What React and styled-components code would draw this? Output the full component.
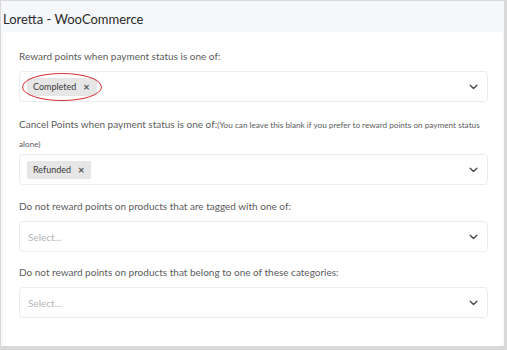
import React from "react";
import styled, { createGlobalStyle } from "styled-components";

const Global = createGlobalStyle`
  html, body { margin: 0; padding: 0; }
  body { font-family: Lato, "Noto Sans", sans-serif; background: #fff; }
  * { box-sizing: border-box; }
`;

const Frame = styled.div`
  width: 507px;
  height: 350px;
  background: #f6f7fb;
  border-style: solid;
  border-color: #d9d9d9;
  border-width: 1px 3px 4px 1px;
  display: flex;
  flex-direction: column;
  overflow: hidden;
`;

const Header = styled.div`
  height: 31px;
  padding: 10px 0 0 2px;
  line-height: 16px;
  font-size: 13px;
  color: #2a2a2a;
`;

const Card = styled.div`
  margin: 0 1px 0 2px;
  background: #fff;
  border-radius: 4px;
  padding: 17px 15px 0 16px;
  flex: 1;
  display: flex;
  flex-direction: column;
`;

const Field = styled.div`
  display: flex;
  flex-direction: column;
  margin-bottom: ${(p) => p.$mb || 0}px;
`;

const Label = styled.div`
  font-size: 10px;
  color: #5c5c5c;
  line-height: ${(p) => p.$lh || 15}px;
  margin-bottom: ${(p) => p.$mb ?? 7}px;
`;

const Hint = styled.span`
  font-size: 8.2px;
  line-height: 10px;
  color: #5c5c5c;
`;

const Select = styled.div`
  height: 31px;
  border: 1px solid #e9edf0;
  border-radius: 4px;
  display: flex;
  align-items: center;
  padding: 0 9px 0 7px;
`;

const Values = styled.div`
  flex: 1;
  display: flex;
  align-items: center;
`;

const Chip = styled.span`
  position: relative;
  display: inline-flex;
  align-items: center;
  gap: 7px;
  background: #e6e6e6;
  border-radius: 2px;
  height: 18px;
  padding: 0 7px 0 6px;
  font-size: 9px;
  color: #3a3a3a;
`;

const Remove = styled.span`
  font-size: 11px;
  color: #555;
  font-weight: 700;
  line-height: 1;
`;

const Circle = styled.span`
  position: absolute;
  left: -5px;
  right: -5px;
  top: -5px;
  bottom: -5px;
  border: 1.5px solid #d9363b;
  border-radius: 50%;
`;

const Placeholder = styled.span`
  font-size: 10px;
  color: #b5b5b5;
  padding-left: 1px;
`;

const Chevron = () => (
  <svg width="9" height="6" viewBox="0 0 9 6">
    <path d="M1.2 1.2 L4.5 4.5 L7.8 1.2" fill="none" stroke="#4a4a4a" strokeWidth="1.4" strokeLinecap="round" strokeLinejoin="round" />
  </svg>
);

const SelectBox = ({ children }) => (
  <Select>
    <Values>{children}</Values>
    <Chevron />
  </Select>
);

export default function App() {
  return (
    <>
      <Global />
      <Frame>
        <Header>Loretta - WooCommerce</Header>
        <Card>
          <Field $mb={13}>
            <Label>Reward points when payment status is one of:</Label>
            <SelectBox>
              <Chip>
                Completed <Remove>×</Remove>
                <Circle />
              </Chip>
            </SelectBox>
          </Field>
          <Field $mb={14}>
            <Label $lh={19} $mb={1}>
              Cancel Points when payment status is one of:
              <Hint>(You can leave this blank if you prefer to reward points on payment status alone)</Hint>
            </Label>
            <SelectBox>
              <Chip>
                Refunded <Remove>×</Remove>
              </Chip>
            </SelectBox>
          </Field>
          <Field $mb={13}>
            <Label>Do not reward points on products that are tagged with one of:</Label>
            <SelectBox>
              <Placeholder>Select...</Placeholder>
            </SelectBox>
          </Field>
          <Field>
            <Label>Do not reward points on products that belong to one of these categories:</Label>
            <SelectBox>
              <Placeholder>Select...</Placeholder>
            </SelectBox>
          </Field>
        </Card>
      </Frame>
    </>
  );
}
